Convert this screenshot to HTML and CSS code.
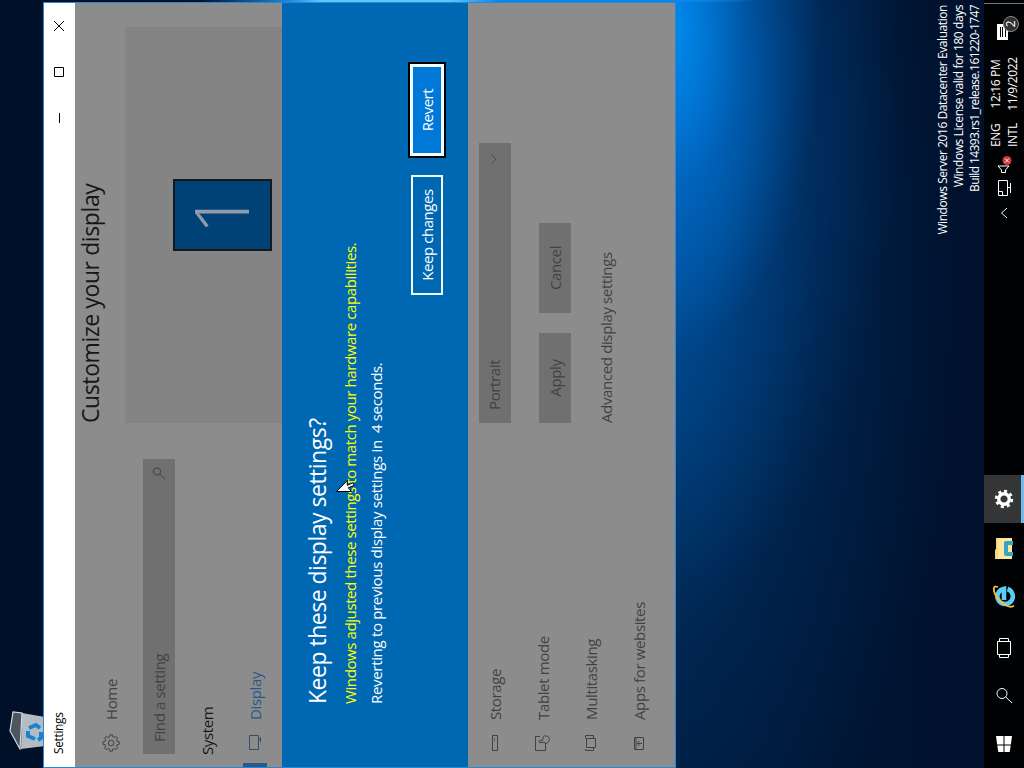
FILE: index.html
```
<!doctype html>
<html lang="en">
<head>
    <meta charset="UTF-8">
    <meta name="viewport" content="width=device-width, initial-scale=1.0">
    <title>Settings</title>
    <link rel="stylesheet" href="styles.css">
</head>
<body>
<!-- portrait desktop, turned on its side -->
<div class="screen">
    <div class="desktop">
        <svg class="desktop__bin" width="42" height="36" viewBox="0 0 42 36">
            <path d="M1 11 L19 1 L38 4 L37 14 Z" fill="#4d565f"/>
            <path d="M1 12 L37 13 L33 36 L4 36 Z" fill="#b4bcc3"/>
            <path d="M1 11 L19 1 L38 4 L37 13 Z" fill="none" stroke="#d5dbe0" stroke-width="1.2"/>
            <g fill="none" stroke="#1683d5" stroke-width="4">
                <path d="M11 26 L14 19 L19 19"/>
                <path d="M22 20 L25 27 L22 31"/>
                <path d="M18 32 L12 32 L10 29"/>
            </g>
        </svg>
        <div class="desktop__mark">
            <p>Windows Server 2016 Datacenter Evaluation</p>
            <p>Windows License valid for 180 days</p>
            <p class="desktop__build">Build 14393.rs1_release.161220-1747</p>
        </div>
    </div>

    <div class="window">
        <div class="titlebar">
            <span class="titlebar__text">Settings</span>
            <div class="titlebar__btn"><svg width="10" height="10"><path d="M0 5.5H10"/></svg></div>
            <div class="titlebar__btn"><svg width="10" height="10"><path d="M.5 .5H9.5V9.5H.5Z"/></svg></div>
            <div class="titlebar__btn"><svg width="10" height="10"><path d="M0 0L10 10M10 0L0 10"/></svg></div>
        </div>

        <div class="pane">
            <div class="side side_top">
                <div class="side__item">
                    <svg class="side__icon" width="18" height="18" viewBox="0 0 18 18">
                        <path d="M7.7 1h2.6l.4 2.1 1.4.6 1.8-1.2 1.8 1.8-1.2 1.8.6 1.4 2.1.4v2.4l-2.1.4-.6 1.4 1.2 1.8-1.8 1.8-1.8-1.2-1.4.6-.4 2.1H7.7l-.4-2.1-1.4-.6-1.8 1.2-1.8-1.8 1.2-1.8-.6-1.4L.8 10.3V7.9l2.1-.4.6-1.4-1.2-1.8 1.8-1.8 1.8 1.2 1.4-.6Z"/>
                        <circle cx="9" cy="9.1" r="2.8"/>
                    </svg>
                    <span>Home</span>
                </div>
                <div class="search">
                    <span>Find a setting</span>
                    <svg class="side__icon" width="14" height="14"><circle cx="8.5" cy="5" r="3.7"/><path d="M6 7.8L1 13"/></svg>
                </div>
                <div class="side__title"><span>System</span></div>
                <div class="side__item side__item_active">
                    <svg class="side__icon" width="18" height="18"><path d="M2.5 3.5H16.5V12.5H2.5ZM12.5 12.5V14.5M10 14.5H15"/></svg>
                    <span>Display</span>
                </div>
            </div>
            <div class="main">
                <h1 class="main__title">Customize your display</h1>
                <div class="preview">
                    <div class="preview__monitor">1</div>
                </div>
            </div>
        </div>

        <div class="dialog">
            <h2 class="dialog__title">Keep these display settings?</h2>
            <p class="dialog__note">Windows adjusted these settings to match your hardware capabilities.</p>
            <p class="dialog__timer">Reverting to previous display settings in&nbsp; 4 seconds.</p>
            <div class="dialog__btns">
                <div class="dialog__btn">Keep changes</div>
                <div class="dialog__btn dialog__btn_focus">Revert</div>
            </div>
        </div>

        <div class="pane">
            <div class="side">
                <div class="side__item">
                    <svg class="side__icon" width="18" height="18"><path d="M1.5 6.5H16.5V11.5H1.5Z"/><path d="M11 8.5H15" stroke-dasharray="1 1"/></svg>
                    <span>Storage</span>
                </div>
                <div class="side__item">
                    <svg class="side__icon" width="18" height="18"><path d="M9 11.5H1.5V1.5H15.5V6"/><path d="M9.5 11V5.5Q10.5 4.5 11.5 5.5V8.5L15.5 9.5Q16.5 10 16 13Q15 15.5 12.5 15.5Q10 15.5 8 11.5L9.5 11"/></svg>
                    <span>Tablet mode</span>
                </div>
                <div class="side__item">
                    <svg class="side__icon" width="18" height="18"><path d="M4.5 4.5H13.5V13.5H4.5ZM3 3.5H1.5V11.5H4.5M13.5 3.5H16.5V11.5H14"/></svg>
                    <span>Multitasking</span>
                </div>
                <div class="side__item">
                    <svg class="side__icon" width="18" height="18"><path d="M2.5 4.5H14.5V13.5H2.5ZM2.5 6H14.5M8.5 12V7.5M6 9.5L8.5 7.5L11 9.5"/></svg>
                    <span>Apps for websites</span>
                </div>
            </div>
            <div class="form">
                <div class="form__select">
                    <span>Portrait</span>
                    <svg width="12" height="8"><path d="M1 1L6 6L11 1"/></svg>
                </div>
                <div class="form__btns">
                    <div class="form__btn">Apply</div>
                    <div class="form__btn">Cancel</div>
                </div>
                <div class="form__link">Advanced display settings</div>
            </div>
        </div>
    </div>

    <div class="taskbar">
        <div class="taskbar__item">
            <svg width="16" height="16"><path fill="#fff" d="M0 2.3L6.5 1.3V7.5H0ZM7.5 1.1L16 0V7.5H7.5ZM0 8.5H6.5V14.7L0 13.7ZM7.5 8.5H16V16L7.5 14.9Z"/></svg>
        </div>
        <div class="taskbar__item">
            <svg width="17" height="17" class="line"><circle cx="10.5" cy="6" r="5"/><path d="M7 9.8L1 16"/></svg>
        </div>
        <div class="taskbar__item">
            <svg width="20" height="16" class="line"><path d="M3.5 1.5H16.5V14.5H3.5ZM3 3.5H.5V12.5H3M17 3.5H19.5V12.5H17"/></svg>
        </div>
        <div class="taskbar__item taskbar__item_app">
            <svg width="24" height="24" viewBox="0 0 24 24">
                <path d="M20 15.5A7.7 7.7 0 1 1 20.3 12H9" fill="none" stroke="#5ccbf5" stroke-width="4.6"/>
                <path d="M3.5 22C-1 18 7 7 14 3.5C19 1 24 1 22 6" fill="none" stroke="#f4c13a" stroke-width="1.8"/>
            </svg>
        </div>
        <div class="taskbar__item taskbar__item_app">
            <svg width="22" height="20">
                <path d="M0 1H9L10 2H21V18H0Z" fill="#f5d77c"/>
                <path d="M0 4H21V18H0Z" fill="#fde69b"/>
                <path d="M3 19V12Q3 10 5 10H16Q18 10 18 12V19H14V14H7V19Z" fill="#35a3c4"/>
            </svg>
        </div>
        <div class="taskbar__item taskbar__item_active">
            <svg width="20" height="20" viewBox="-10 -10 20 20">
                <circle r="5.3" fill="none" stroke="#fff" stroke-width="3.4"/>
                <circle r="7.8" fill="none" stroke="#fff" stroke-width="2.8" stroke-dasharray="3.06 3.06"/>
            </svg>
        </div>
        <div class="tray">
            <svg class="line tray__up" width="12" height="8"><path d="M1 7L6 1.5L11 7"/></svg>
            <svg class="line tray__net" width="17" height="15"><path d="M1.5 1.5H16.5V10.5H1.5ZM1.5 5.5H5.5V1.5M9.5 10.5V13.5M4 13.5H14"/></svg>
            <svg class="tray__vol" width="18" height="16">
                <path class="line" d="M1.5 5.5H4L8 2V13L4 9.5H1.5Z"/>
                <circle cx="13.5" cy="11" r="4.5" fill="#d13438"/>
                <path d="M11.500 9L15.500 13M15.500 9L11.500 13" stroke="#fff"/>
            </svg>
            <div class="tray__lang"><span>ENG</span><span>INTL</span></div>
            <div class="tray__clock"><span>12:16 PM</span><span>11/9/2022</span></div>
            <div class="tray__notes">
                <svg width="16" height="15"><path d="M0 0H16V11H12V15L8 11H0Z" fill="#fff"/><path d="M3 3.500H13M3 5.500H13M3 8.500H13" stroke="#000"/></svg>
                <span class="tray__badge">2</span>
            </div>
        </div>
    </div>

    <svg class="cursor" width="13" height="20"><path d="M.5 .5V15.5L4.2 12.2L6.7 18.3L9.2 17.2L6.7 11.3H11.5Z" fill="#fff" stroke="#000"/></svg>
</div>
</body>
</html>
```
FILE: styles.css
```
* {
    box-sizing: border-box;
}

body {
    margin: 0;
    width: 1024px;
    height: 768px;
    overflow: hidden;
    background-color: #000;
    font-family: "Open Sans", "Noto Sans", sans-serif;
}

h1, h2, p {
    margin: 0;
    font-weight: 400;
}

svg {
    display: block;
    flex-shrink: 0;
}

.screen {
    position: relative;
    width: 768px;
    height: 1024px;
    margin-bottom: -256px;
    display: flex;
    flex-direction: column;
    transform-origin: 0 0;
    transform: rotate(-90deg) translateX(-768px);
    font-size: 15px;
    letter-spacing: -0.36px;
    white-space: nowrap;
    color: #fff;
}

.line {
    fill: none;
    stroke: #fff;
}

/* desktop */
.desktop {
    height: 984px;
    background:
        linear-gradient(rgba(0, 0, 0, 0) 200px, #1a8ae0 290px, #5cc4ff 320px, #5cc4ff 450px, #0a86ee 500px, #0a86ee 680px, rgba(0, 0, 0, 0) 760px) right top / 2px 100% no-repeat,
        radial-gradient(ellipse 330px 150px at 745px 670px, rgba(0, 150, 255, 0.85), rgba(0, 130, 240, 0.35) 50%, rgba(0, 120, 220, 0) 100%),
        radial-gradient(ellipse 500px 230px at 670px 670px, rgba(0, 110, 205, 0.65), rgba(0, 90, 180, 0.28) 50%, rgba(0, 80, 160, 0) 100%),
        radial-gradient(ellipse 700px 320px at 480px 640px, rgba(0, 85, 160, 0.8), rgba(0, 60, 120, 0.35) 55%, rgba(0, 40, 85, 0) 100%),
        linear-gradient(#001028, #001a3c 60%, #00112c);
    display: flex;
    flex-direction: column;
    justify-content: space-between;
}

.desktop__bin {
    margin: 9px 0 0 18px;
}

.desktop__mark {
    padding: 0 5px 1px 0;
    font-size: 12px;
    line-height: 16px;
    letter-spacing: -0.43px;
    display: flex;
    flex-direction: column;
    align-items: flex-end;
}

.desktop__build {
    letter-spacing: -0.6px;
}

/* settings window */
.window {
    position: absolute;
    left: 0;
    top: 43px;
    width: 766px;
    height: 633px;
    border: 1px solid #2c86d2;
    background-color: #8c8c8c;
}

.titlebar {
    height: 31px;
    padding: 0 0 2px 13px;
    background-color: #fff;
    color: #000;
    font-size: 12px;
    display: flex;
    align-items: center;
}

.titlebar__text {
    margin-right: auto;
}

.titlebar__btn {
    width: 46px;
    display: flex;
    justify-content: center;
}

.titlebar__btn svg {
    stroke: #000;
    fill: none;
}

.pane {
    height: 207px;
    display: flex;
    color: #424242;
}

.side {
    width: 344px;
    padding-top: 3px;
}

.side_top {
    padding-top: 12px;
}

.side__item {
    height: 48px;
    padding-left: 15px;
    display: flex;
    align-items: center;
    gap: 14px;
}

.side__item_active {
    position: relative;
    color: #265a89;
}

.side__item_active::before {
    content: "";
    position: absolute;
    left: 0;
    top: 12px;
    width: 4px;
    height: 24px;
    background-color: #265a89;
}

.side__icon {
    fill: none;
    stroke: #424242;
}

.side__item_active .side__icon {
    stroke: #30506e;
}

.search {
    width: 295px;
    height: 32px;
    margin: 8px 0 8px 13px;
    padding: 0 7px 1px 12px;
    background-color: #707070;
    display: flex;
    align-items: center;
    justify-content: space-between;
}

.side__title {
    height: 48px;
    padding-left: 12px;
    color: #161616;
    display: flex;
    align-items: center;
}

.main {
    flex: 1;
    color: #161616;
}

.main__title {
    height: 50px;
    font-size: 23px;
    line-height: 30px;
    letter-spacing: -0.4px;
}

.preview {
    width: 396px;
    height: 157px;
    padding-top: 48px;
    background-color: #848484;
    display: flex;
    justify-content: center;
    align-items: flex-start;
}

.preview__monitor {
    width: 72px;
    height: 99px;
    margin-left: 20px;
    padding-left: 3px;
    border: 2px solid #14191f;
    background-color: #004275;
    color: #8c9cad;
    font-size: 75px;
    font-weight: 300;
    line-height: 90px;
    text-align: center;
}

/* confirmation */
.dialog {
    height: 186px;
    padding: 18px 59px 0 63px;
    background-color: #0067b3;
}

.dialog__title {
    font-size: 23px;
    line-height: 34px;
    letter-spacing: -0.5px;
}

.dialog__note {
    margin-top: 3px;
    line-height: 26px;
    letter-spacing: -0.4px;
    color: #ffff00;
}

.dialog__timer {
    line-height: 26px;
    letter-spacing: -0.32px;
}

.dialog__btns {
    margin-top: 21px;
    display: flex;
    justify-content: flex-end;
    align-items: center;
    gap: 17px;
    letter-spacing: -0.45px;
}

.dialog__btn {
    width: 120px;
    height: 32px;
    border: 2px solid #f0ffff;
    display: flex;
    justify-content: center;
    align-items: center;
}

.dialog__btn_focus {
    width: 92px;
    height: 34px;
    margin: 0 2px;
    border-width: 3px;
    background-color: #0078d7;
    box-shadow: 0 0 0 2px #000;
}

/* orientation form */
.form {
    padding-top: 11px;
}

.form__select {
    width: 280px;
    height: 32px;
    padding: 0 10px 2px 13px;
    background-color: #707070;
    display: flex;
    align-items: center;
    justify-content: space-between;
}

.form__select svg {
    fill: none;
    stroke: #505050;
}

.form__btns {
    margin-top: 28px;
    display: flex;
    gap: 20px;
}

.form__btn {
    width: 90px;
    height: 32px;
    background-color: #707070;
    display: flex;
    justify-content: center;
    align-items: center;
}

.form__link {
    margin-top: 23px;
    line-height: 24px;
}

/* taskbar */
.taskbar {
    height: 40px;
    background-color: #010204;
    display: flex;
}

.taskbar__item {
    width: 48px;
    display: flex;
    justify-content: center;
    align-items: center;
}

.taskbar__item_app {
    margin-right: 1px;
    padding-left: 5px;
}

.taskbar__item_active {
    margin-left: 3px;
    background-color: #343638;
    border-bottom: 3px solid #76b9ed;
    padding-top: 3px;
}

.tray {
    margin-left: auto;
    padding-right: 3px;
    font-size: 12px;
    line-height: 17px;
    display: flex;
    align-items: center;
}

.tray__up {
    margin-right: 10px;
}

.tray__net {
    margin-right: 6px;
}

.tray__lang {
    width: 25px;
    margin-left: 9px;
    display: flex;
    flex-direction: column;
}

.tray__clock {
    width: 50px;
    margin: 0 19px 0 13px;
    display: flex;
    flex-direction: column;
    align-items: center;
}

.tray__notes {
    position: relative;
    width: 37px;
    height: 40px;
    padding-top: 13px;
    border-right: 1px solid #777;
}

.tray__badge {
    position: absolute;
    left: 8px;
    top: 19px;
    width: 16px;
    height: 16px;
    border: 1px solid #8a8a8a;
    border-radius: 50%;
    background-color: #303030;
    line-height: 14px;
    text-align: center;
}

.cursor {
    position: absolute;
    left: 276px;
    top: 336px;
}
```
